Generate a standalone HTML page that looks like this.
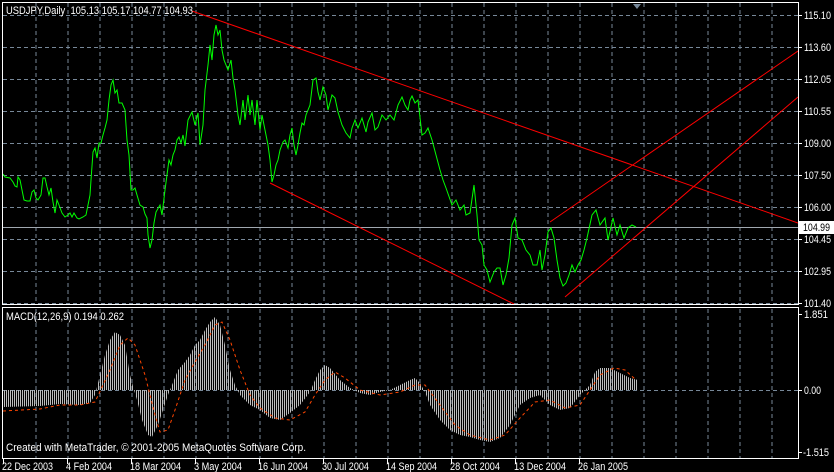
<!DOCTYPE html>
<html><head><style>
html,body{margin:0;padding:0;background:#000;width:834px;height:472px;overflow:hidden}
svg{display:block}
text{font-family:"Liberation Sans",sans-serif;font-size:11px;fill:#fff}
</style></head><body>
<svg width="834" height="472" viewBox="0 0 834 472" xmlns="http://www.w3.org/2000/svg">
<defs>
<pattern id="hb" width="2" height="10" patternUnits="userSpaceOnUse" x="0"><rect x="0" y="0" width="1" height="10" fill="#bdbdbd"/></pattern>
<clipPath id="c1"><rect x="3" y="3" width="795" height="301"/></clipPath>
<clipPath id="c2"><rect x="3" y="309" width="795" height="149"/></clipPath>
</defs>
<rect width="834" height="472" fill="#000"/>
<g stroke="#778899" stroke-width="1" stroke-dasharray="4,3" fill="none">
<path d="M36 3V304M68 3V304M100 3V304M132 3V304M164 3V304M196 3V304M228 3V304M260 3V304M292 3V304M324 3V304M356 3V304M388 3V304M420 3V304M452 3V304M484 3V304M516 3V304M548 3V304M580 3V304M612 3V304M644 3V304M676 3V304M708 3V304M740 3V304M772 3V304"/>
<path d="M3 15.5H798M3 47.5H798M3 79.5H798M3 111.5H798M3 143.5H798M3 175.5H798M3 207.5H798M3 239.5H798M3 271.5H798M3 303.5H798"/>
<path d="M36 309V458M68 309V458M100 309V458M132 309V458M164 309V458M196 309V458M228 309V458M260 309V458M292 309V458M324 309V458M356 309V458M388 309V458M420 309V458M452 309V458M484 309V458M516 309V458M548 309V458M580 309V458M612 309V458M644 309V458M676 309V458M708 309V458M740 309V458M772 309V458"/>
<path d="M3 390.5H798"/>
</g>
<line x1="3" y1="227.5" x2="798" y2="227.5" stroke="#a0a8b0"/>
<g clip-path="url(#c1)" stroke="#ff0000" stroke-width="1" fill="none">
<line x1="192" y1="11" x2="798" y2="223"/>
<line x1="270" y1="183" x2="514" y2="304"/>
<line x1="550" y1="222" x2="798" y2="51"/>
<line x1="565" y1="297" x2="798" y2="97"/>
</g>
<polyline clip-path="url(#c1)" fill="none" stroke="#00ff00" stroke-width="1" points="3,174 5,177 10,178 13,182 15,186 17,187 18,177 20,180 22,190 24,200 27,201 30,201 32,192 34,190 36,198 38,200 41,195 43,178 45,178 47,187 49,195 51,188 53,202 55,213 57,200 59,205 62,213 65,217 68,215 70,213 72,217 74,213 77,218 79,219 83,217 86,215 88,205 90,195 91,180 93,152 95,148 97,158 99,143 101,143 103,135 105,128 107,120 109,100 111,85 113,80 115,93 117,90 119,103 122,103 125,110 127,140 129,155 131,190 133,190 135,188 137,195 140,205 143,207 145,214 147,218 148,235 150,248 152,240 154,223 156,212 160,205 162,215 165,190 167,175 169,160 171,165 173,155 175,150 177,140 179,137 181,143 183,135 185,146 188,120 192,112 195,125 198,113 200,145 203,125 205,90 208,65 210,45 212,60 214,35 216,25 218,35 220,30 222,50 224,60 226,65 228,70 231,60 233,78 235,90 238,115 240,125 243,100 245,120 248,95 250,115 252,100 255,125 257,100 260,130 262,115 264,125 268,145 270,160 272,182 274,175 276,165 278,160 280,150 283,142 285,140 288,148 290,135 292,128 294,145 296,155 298,145 300,133 302,123 304,125 306,115 310,105 313,80 316,78 318,92 320,100 323,87 326,95 328,110 332,95 335,98 338,112 342,125 346,133 350,138 352,128 355,120 358,128 362,118 366,132 368,122 372,113 375,130 378,127 382,115 386,120 390,115 394,120 398,105 402,97 405,105 408,110 410,100 412,96 415,103 418,100 422,135 425,133 428,128 432,140 436,155 440,170 443,180 446,188 452,205 456,200 460,210 464,205 466,215 470,213 474,185 477,215 479,240 482,245 484,265 487,270 490,282 494,272 497,268 500,268 503,285 506,275 509,258 512,225 515,218 518,238 522,240 526,250 530,255 533,265 537,265 540,250 542,270 545,255 548,232 551,228 554,238 557,260 560,278 563,286 566,283 569,275 572,265 575,272 578,265 581,260 584,250 587,238 592,215 596,210 600,225 605,218 608,240 613,218 617,235 620,225 624,238 628,228 632,225 636,227"/>
<polygon clip-path="url(#c2)" fill="url(#hb)" points="3,390 3,407 40,406 60,404 80,405 90,403 95,395 100,375 105,355 110,340 115,332 120,335 125,345 130,375 134,390 137,400 142,420 148,435 152,437 158,425 163,410 168,395 172,385 178,370 185,362 190,355 195,345 200,340 205,330 210,322 215,317 220,325 225,345 230,370 235,385 240,395 250,405 260,410 270,418 280,420 290,413 300,405 310,392 315,380 320,370 325,365 330,368 340,380 350,388 360,393 370,395 380,392 390,390 400,385 410,380 415,378 420,383 425,392 430,405 440,420 450,430 460,435 470,437 480,440 490,442 500,438 510,425 520,405 530,398 540,395 550,405 560,410 570,408 580,395 590,385 595,372 600,368 610,368 620,373 630,378 638,380 638,390"/>
<polyline fill="none" stroke="#ff4500" stroke-width="1" stroke-dasharray="3,3" points="3,411 40,409 60,405 80,405 95,402 110,370 120,345 128,338 135,345 145,375 155,415 160,432 168,430 175,410 185,380 195,362 205,345 215,325 222,322 230,340 240,370 250,395 260,408 275,418 290,420 305,412 315,395 325,380 335,372 345,378 360,390 380,395 400,392 415,385 425,385 440,405 455,425 470,435 490,440 505,435 520,418 535,402 550,400 565,408 580,405 590,390 600,375 614,368 625,370 636,380"/>
<rect x="2.5" y="2.5" width="796" height="302" fill="none" stroke="#fff"/>
<rect x="2.5" y="307.5" width="796" height="151" fill="none" stroke="#fff"/>
<g stroke="#fff"><path d="M798 15.5h4M798 47.5h4M798 79.5h4M798 111.5h4M798 143.5h4M798 175.5h4M798 207.5h4M798 239.5h4M798 271.5h4M798 303.5h4M798 314.5h4M798 390.5h4M798 452.5h4M3.5 459v5M67.5 459v5M131.5 459v5M195.5 459v5M259.5 459v5M323.5 459v5M387.5 459v5M451.5 459v5M515.5 459v5M579.5 459v5"/></g>
<path d="M633 4h8l-4 5z" fill="#778899"/>
<text x="6" y="14" textLength="187" lengthAdjust="spacingAndGlyphs">USDJPY,Daily&#160; 105.13 105.17 104.77 104.93</text>
<g>
<text x="804" y="19" textLength="27" lengthAdjust="spacingAndGlyphs">115.10</text><text x="804" y="51" textLength="27" lengthAdjust="spacingAndGlyphs">113.60</text><text x="804" y="83" textLength="27" lengthAdjust="spacingAndGlyphs">112.05</text><text x="804" y="115" textLength="27" lengthAdjust="spacingAndGlyphs">110.55</text><text x="804" y="147" textLength="27" lengthAdjust="spacingAndGlyphs">109.00</text><text x="804" y="179" textLength="27" lengthAdjust="spacingAndGlyphs">107.50</text><text x="804" y="211" textLength="27" lengthAdjust="spacingAndGlyphs">106.00</text><text x="804" y="243" textLength="27" lengthAdjust="spacingAndGlyphs">104.45</text><text x="804" y="275" textLength="27" lengthAdjust="spacingAndGlyphs">102.95</text><text x="804" y="307" textLength="27" lengthAdjust="spacingAndGlyphs">101.40</text>
<text x="804" y="318" textLength="24" lengthAdjust="spacingAndGlyphs">1.851</text><text x="804" y="394" textLength="17" lengthAdjust="spacingAndGlyphs">0.00</text><text x="803" y="456" textLength="26" lengthAdjust="spacingAndGlyphs">-1.515</text>
</g>
<rect x="799" y="221" width="35" height="13" fill="#fff"/>
<text x="803" y="231" style="fill:#000" textLength="27" lengthAdjust="spacingAndGlyphs">104.99</text>
<text x="6" y="320" textLength="118" lengthAdjust="spacingAndGlyphs">MACD(12,26,9) 0.194 0.262</text>
<text x="6" y="451" textLength="300" lengthAdjust="spacingAndGlyphs">Created with MetaTrader, © 2001-2005 MetaQuotes Software Corp.</text>
<g>
<text x="2" y="470" textLength="51" lengthAdjust="spacingAndGlyphs">22 Dec 2003</text><text x="66" y="470" textLength="46" lengthAdjust="spacingAndGlyphs">4 Feb 2004</text><text x="130" y="470" textLength="51" lengthAdjust="spacingAndGlyphs">18 Mar 2004</text><text x="194" y="470" textLength="48" lengthAdjust="spacingAndGlyphs">3 May 2004</text><text x="258" y="470" textLength="50" lengthAdjust="spacingAndGlyphs">16 Jun 2004</text><text x="322" y="470" textLength="47" lengthAdjust="spacingAndGlyphs">30 Jul 2004</text><text x="386" y="470" textLength="51" lengthAdjust="spacingAndGlyphs">14 Sep 2004</text><text x="450" y="470" textLength="50" lengthAdjust="spacingAndGlyphs">28 Oct 2004</text><text x="514" y="470" textLength="52" lengthAdjust="spacingAndGlyphs">13 Dec 2004</text><text x="578" y="470" textLength="50" lengthAdjust="spacingAndGlyphs">26 Jan 2005</text>
</g>
</svg>
</body></html>
